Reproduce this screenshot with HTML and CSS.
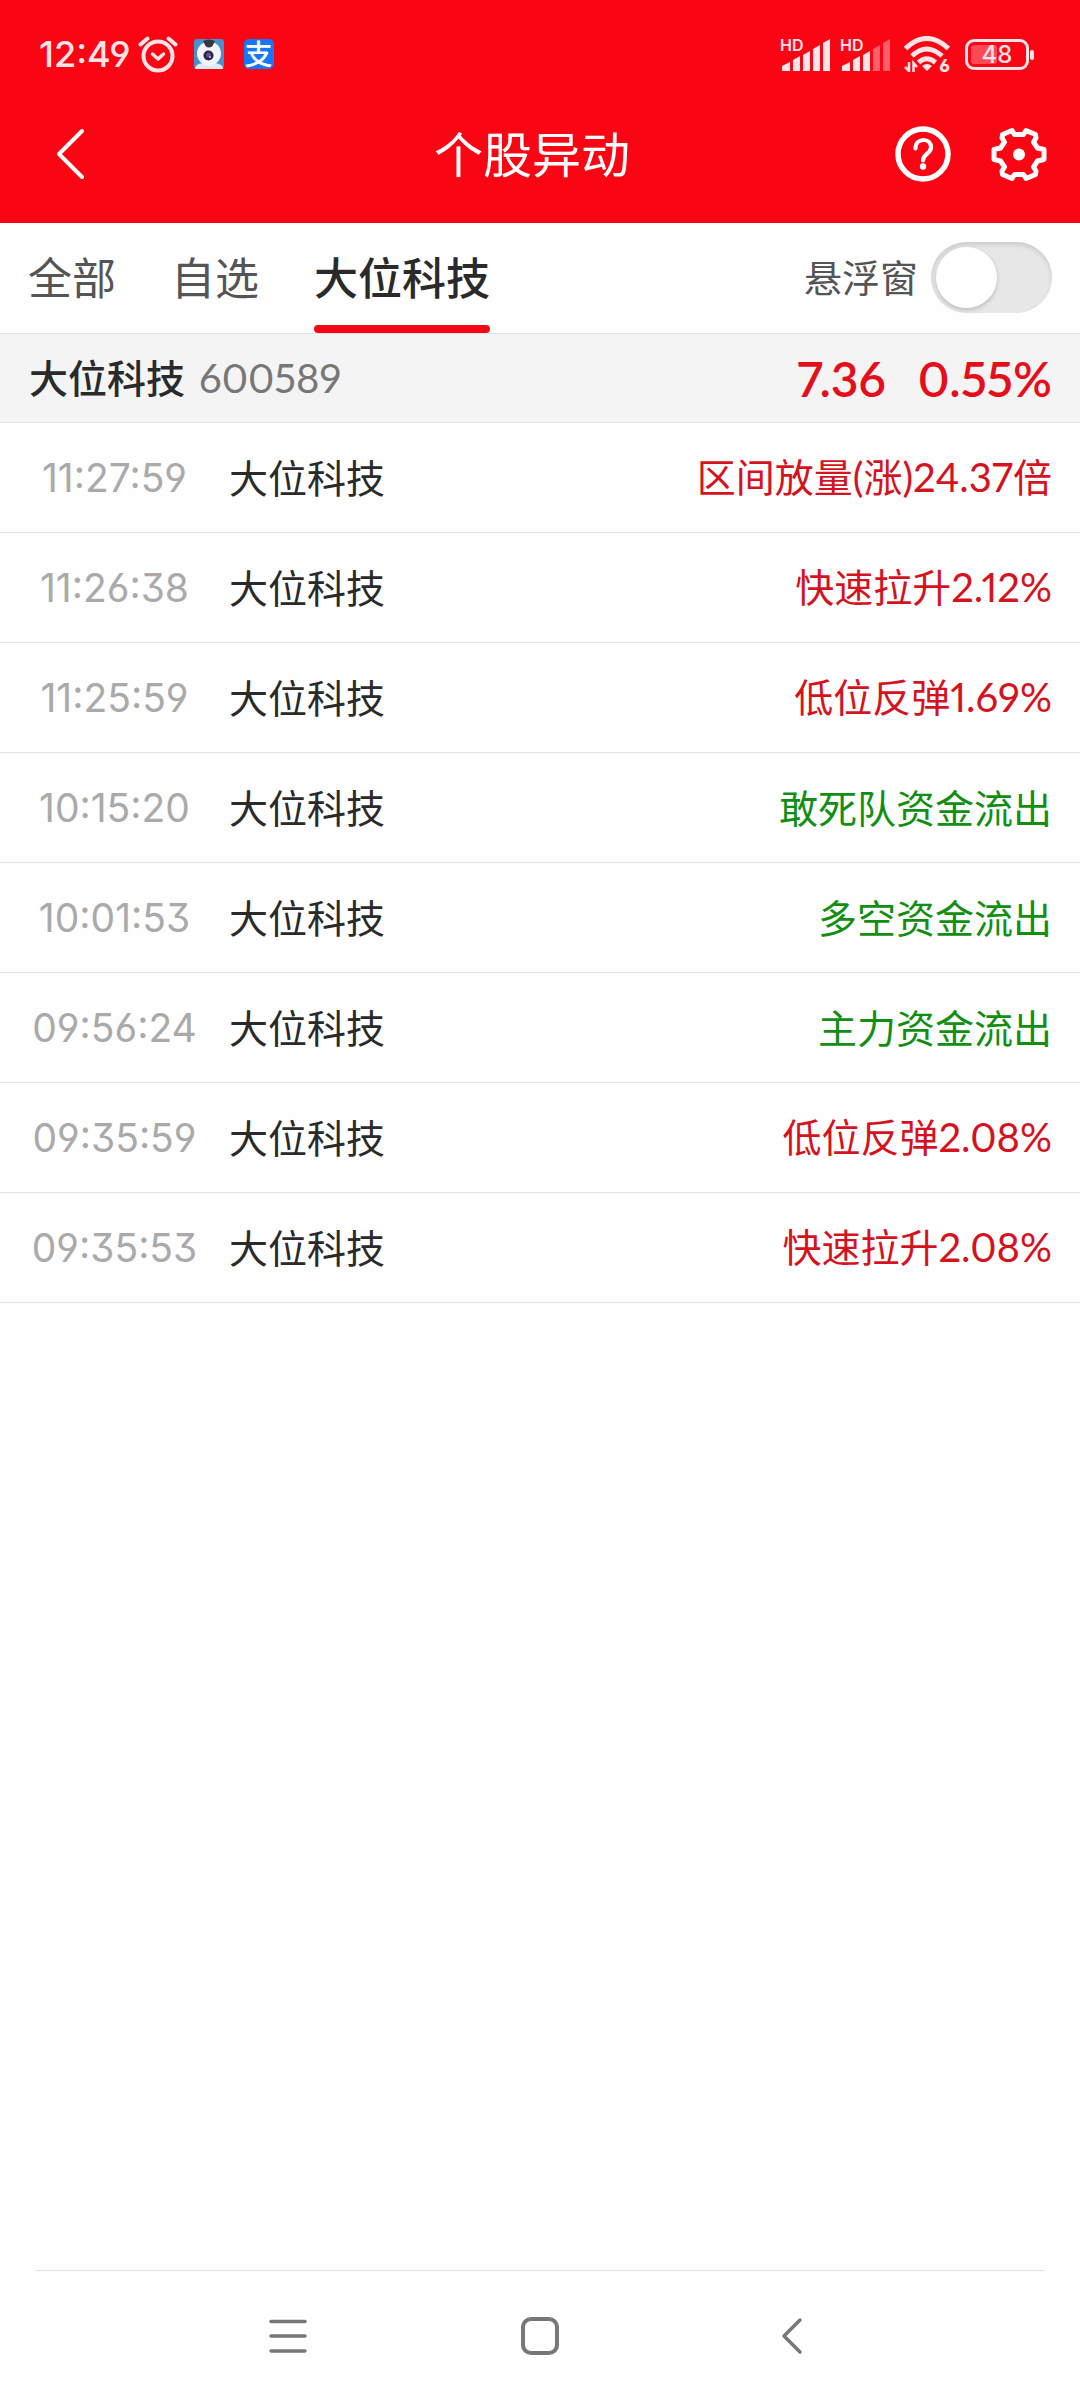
FILE: index.html
```html
<!DOCTYPE html>
<html lang="zh-CN">
<head>
<meta charset="utf-8">
<meta name="viewport" content="width=device-width, initial-scale=1">
<title>个股异动</title>
<link rel="stylesheet" href="styles.css">
</head>
<body>
<div class="page">
  <header class="top">
    <div class="status">
      <div class="status-left">
        <span class="clock">12:49</span>
        <svg class="alarm" width="40" height="40" viewBox="0 0 40 40" fill="none" stroke="currentColor" stroke-linecap="round" stroke-linejoin="round">
          <circle cx="20" cy="22" r="14.5" stroke-width="4"/>
          <path d="M14.500 20l5.500 5 5.500-5" stroke-width="3.500"/>
          <path d="M2.500 10.500L9.500 4.500M37.500 10.500l-7-6" stroke-width="4"/>
        </svg>
        <svg class="app" width="30" height="30" viewBox="0 0 30 30">
          <rect width="30" height="30" rx="3" fill="#4493cd"/>
          <path d="M1 30q0-5 8-6h12q8 1 8 6z" fill="#dfeaf8"/>
          <circle cx="15" cy="14.500" r="12" fill="#f3f4fb"/>
          <path d="M9 2q6-3 12 0l-2.500 5q-3.500 3-7 0z" fill="#353744"/>
          <circle cx="14.500" cy="16.500" r="5" fill="#29243c"/>
          <circle cx="14.500" cy="16" r="2.500" fill="#6a4b8e"/>
          <circle cx="16" cy="18" r="1" fill="#a9c5ff"/>
        </svg>
        <span class="pay">支</span>
      </div>
      <div class="status-right">
        <div class="signal">
          <span class="hd">HD</span>
          <svg width="50" height="34" viewBox="0 0 50 34" fill="currentColor">
            <path d="M2 29l8-4v9H2zM13 23l7-4v15h-7zM23 18l7-4v20h-7zM33 12l7-4v26h-7zM43 6l7-4v32h-7z"/>
          </svg>
        </div>
        <div class="signal">
          <span class="hd">HD</span>
          <svg width="50" height="34" viewBox="0 0 50 34" fill="currentColor">
            <path d="M2 29l8-4v9H2zM13 23l7-4v15h-7zM23 18l7-4v20h-7z"/>
            <path opacity=".4" d="M33 12l7-4v26h-7zM43 6l7-4v32h-7z"/>
          </svg>
        </div>
        <div class="wifi">
          <svg width="46" height="36" viewBox="0 0 46 36" fill="none" stroke="currentColor" stroke-width="5">
            <path d="M1.500 12.500Q22.500-7.500 44.500 12.500M8 20Q22.500 6 38 20M14.500 26.500Q22.500 19 31.500 26.500"/>
            <path d="M18 30q5-4 10 0l-5 5z" fill="currentColor" stroke="none"/>
            <path d="M5 26v9L1 31M9.500 36v-9l3.500 4" stroke-width="2.500"/>
          </svg>
          <span class="gen">6</span>
        </div>
        <div class="battery"><span class="level"></span><span class="percent">48</span></div>
      </div>
    </div>
    <div class="bar">
      <button class="icon-btn back" type="button" aria-label="返回">
        <svg width="30" height="52" viewBox="0 0 30 52" fill="none" stroke="currentColor" stroke-width="4" stroke-linecap="round" stroke-linejoin="round"><path d="M26 3L3 26l23 23"/></svg>
      </button>
      <h1 class="title">个股异动</h1>
      <div class="actions">
        <button class="icon-btn" type="button" aria-label="帮助">
          <svg width="56" height="56" viewBox="0 0 56 56" fill="none" stroke="currentColor" stroke-linecap="round">
            <circle cx="28" cy="28" r="25" stroke-width="5.500"/>
            <path d="M20.500 22.500c0-5.500 3.500-8.500 8-8.500s7.500 3 7.500 7.500c0 6-8 6.500-8 13" stroke-width="4.200"/>
            <circle cx="28" cy="40.500" r="3.200" fill="currentColor" stroke="none"/>
          </svg>
        </button>
        <button class="icon-btn" type="button" aria-label="设置">
          <svg width="56" height="56" viewBox="0 0 56 56" fill="none" stroke="currentColor" stroke-width="5" stroke-linejoin="round">
            <path d="M23.500 8.500h9L35 4.500 44.500 8.500 45 12l-2.500 4 4 6 6.500 1.500v10l-6.500 1.500-4 6 2.500 4-.5 3.500L35 52.500l-2.500-4h-9L21 52.500 11.500 48.500 11 45l2.500-4-4-6L3 33.500v-10L9.500 22l4-6-2.500-4 .5-3.500L21 4.500z"/>
            <circle cx="28" cy="28.500" r="6" fill="currentColor" stroke="none"/>
          </svg>
        </button>
      </div>
    </div>
  </header>

  <nav class="tabs">
    <a class="tab" href="#all">全部</a>
    <a class="tab" href="#watch">自选</a>
    <a class="tab active" href="#stock" aria-current="page">大位科技</a>
    <label class="float-label" for="float">悬浮窗</label>
    <input class="switch" id="float" type="checkbox" role="switch">
  </nav>

  <main class="content">
    <section class="stock" id="stock">
      <h2 class="stock-name">大位科技</h2>
      <span class="code num">600589</span>
      <span class="price">7.36</span>
      <span class="price">0.55%</span>
    </section>
    <table class="events">
      <tbody>
        <tr><td class="time">11:27:59</td><td class="name">大位科技</td><td class="event up">区间放量<span class="num">(</span>涨<span class="num">)24.37</span>倍</td></tr>
        <tr><td class="time">11:26:38</td><td class="name">大位科技</td><td class="event up">快速拉升<span class="num">2.12%</span></td></tr>
        <tr><td class="time">11:25:59</td><td class="name">大位科技</td><td class="event up">低位反弹<span class="num">1.69%</span></td></tr>
        <tr><td class="time">10:15:20</td><td class="name">大位科技</td><td class="event down">敢死队资金流出</td></tr>
        <tr><td class="time">10:01:53</td><td class="name">大位科技</td><td class="event down">多空资金流出</td></tr>
        <tr><td class="time">09:56:24</td><td class="name">大位科技</td><td class="event down">主力资金流出</td></tr>
        <tr><td class="time">09:35:59</td><td class="name">大位科技</td><td class="event up">低位反弹<span class="num">2.08%</span></td></tr>
        <tr><td class="time">09:35:53</td><td class="name">大位科技</td><td class="event up">快速拉升<span class="num">2.08%</span></td></tr>
      </tbody>
    </table>
  </main>

  <footer class="sysnav">
    <button class="sys-btn" type="button" aria-label="最近任务">
      <svg width="38" height="38" viewBox="0 0 38 38" fill="none" stroke="currentColor" stroke-width="3.500" stroke-linecap="round"><path d="M2 4.500h34M2 19h34M2 34h34"/></svg>
    </button>
    <button class="sys-btn" type="button" aria-label="主屏幕">
      <svg width="38" height="38" viewBox="0 0 38 38" fill="none" stroke="currentColor" stroke-width="4"><rect x="2" y="2" width="34" height="34" rx="8"/></svg>
    </button>
    <button class="sys-btn" type="button" aria-label="返回">
      <svg width="38" height="38" viewBox="0 0 38 38" fill="none" stroke="currentColor" stroke-width="3.500" stroke-linecap="round" stroke-linejoin="round"><path d="M27 3L11 19l16 16"/></svg>
    </button>
  </footer>
</div>
</body>
</html>
```
FILE: styles.css
```css
* {
  box-sizing: border-box;
}

body {
  margin: 0;
  background: #fefefe;
  color: #2a2a2a;
  font-family: "Noto Sans CJK SC", "Noto Sans", sans-serif;
  font-size: 39px;
}

button {
  padding: 0;
  border: 0;
  background: none;
  color: inherit;
  font: inherit;
}

svg {
  display: block;
}

.page {
  display: flex;
  flex-direction: column;
  min-height: 100vh;
}

.time,
.clock,
.hd,
.gen,
.percent {
  font-family: Inter, sans-serif;
  font-feature-settings: "cv03", "cv04", "cv09";
}

.num,
.price {
  font-family: Lato, sans-serif;
  font-feature-settings: "pnum";
}

.num {
  font-size: 40px;
}

/* Header */
.top {
  background: #fa0513;
  color: #fff;
}

.status {
  display: flex;
  justify-content: space-between;
  align-items: center;
  height: 85px;
  padding: 23px 51px 0 39px;
  color: #ffe3e6;
}

.status-left,
.status-right {
  display: flex;
  align-items: center;
}

.clock {
  font-size: 36px;
  font-weight: 500;
}

.alarm {
  margin-left: 7px;
}

.app {
  margin-left: 16px;
}

.pay {
  width: 30px;
  height: 30px;
  margin-left: 20px;
  border-radius: 5px;
  background: #1677f8;
  color: #fff;
  font-size: 28px;
  font-weight: 500;
  line-height: 28px;
  text-align: center;
}

.status-right {
  gap: 10px;
}

.signal,
.wifi,
.battery {
  position: relative;
}

.hd {
  position: absolute;
  top: 0;
  left: 0;
  font-size: 16px;
  font-weight: 600;
  line-height: 16px;
}

.wifi {
  margin-left: 4px;
}

.gen {
  position: absolute;
  right: 0;
  bottom: 0;
  font-size: 17px;
  font-weight: 800;
  line-height: 12px;
}

.battery {
  width: 64px;
  height: 31px;
  margin-left: 5px;
  border: 3px solid currentColor;
  border-radius: 9px;
}

.battery::after {
  content: "";
  position: absolute;
  top: 8px;
  right: -8px;
  width: 4px;
  height: 10px;
  border-radius: 2px;
  background: currentColor;
}

.level {
  position: absolute;
  inset: 3px 50% 3px 3px;
  border-radius: 3px;
  background: #ff4a56;
}

.percent {
  position: relative;
  display: block;
  font-size: 24px;
  font-weight: 500;
  line-height: 25px;
  text-align: center;
}

.bar {
  display: grid;
  grid-template-columns: 1fr auto 1fr;
  align-items: center;
  height: 138px;
  padding: 0 33px 0 17px;
}

.back {
  justify-self: start;
  padding: 0 39px;
}

.title {
  margin: 0;
  padding-bottom: 4px;
  font-size: 49px;
  font-weight: 400;
  line-height: 60px;
}

.actions {
  display: flex;
  justify-content: flex-end;
  gap: 40px;
}

/* Tabs */
.tabs {
  display: flex;
  align-items: center;
  height: 111px;
  padding: 0 28px;
  border-bottom: 1px solid #e2e2e2;
}

.tab {
  position: relative;
  margin-right: 55px;
  padding-bottom: 4px;
  color: #555;
  font-size: 44px;
  line-height: 106px;
  text-decoration: none;
}

.tab.active {
  color: #2a2a2a;
  font-weight: 500;
}

.tab.active::after {
  content: "";
  position: absolute;
  right: 0;
  bottom: 0;
  left: 0;
  height: 8px;
  border-radius: 4px;
  background: #f40815;
}

.float-label {
  margin-left: auto;
  padding-bottom: 6px;
  color: #555;
  font-size: 38px;
}

.switch {
  appearance: none;
  width: 121px;
  height: 71px;
  margin: 0 0 2px 13px;
  padding: 5px;
  border-radius: 36px;
  background: #e7e7e7;
  box-shadow: inset 0 3px 4px #ccc;
}

.switch::before {
  content: "";
  display: block;
  width: 61px;
  height: 61px;
  border-radius: 50%;
  background: #fff;
  box-shadow: 0 2px 4px #bbb;
}

.switch:checked::before {
  margin-left: auto;
}

/* Stock summary */
.content {
  flex: 1;
}

.stock {
  display: flex;
  align-items: center;
  height: 89px;
  padding: 0 28px 0 29px;
  border-bottom: 1px solid #e2e2e2;
  background: #f4f4f4;
}

.stock-name {
  margin: 0;
  padding-bottom: 4px;
  font-size: 39px;
  font-weight: 500;
}

.code {
  margin-left: 14px;
  margin-right: auto;
  color: #777;
}

.price {
  margin-left: 32px;
  color: #e40f1b;
  font-size: 48px;
  font-weight: 600;
}

/* Event list */
.events {
  width: 100%;
  border-collapse: separate;
  border-spacing: 0;
}

.events td {
  height: 110px;
  padding: 0 0 4px;
  border-bottom: 1px solid #e2e2e2;
  line-height: 50px;
}

.events .time {
  width: 229px;
  padding-bottom: 0;
  color: #aaa;
  text-align: center;
}

.events .event {
  padding-right: 28px;
  text-align: right;
}

.up {
  color: #d5131e;
}

.down {
  color: #128f12;
}

/* System navigation */
.sysnav {
  display: grid;
  grid-template-columns: repeat(3, 1fr);
  height: 130px;
  margin: 0 36px;
  padding: 0 126px;
  border-top: 1px solid #e4e4e4;
  color: #777;
}

.sys-btn {
  display: flex;
  align-items: center;
  justify-content: center;
}
```
